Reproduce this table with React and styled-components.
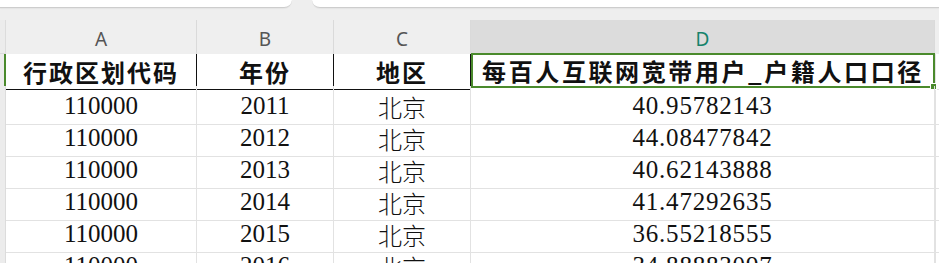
import React from 'react';
import styled, { createGlobalStyle } from 'styled-components';

const GlobalStyle = createGlobalStyle`
  html, body {
    margin: 0;
    padding: 0;
    background: #ffffff;
    overflow: hidden;
  }
`;

const COLUMNS = '6px 191px 137px 137px 464px 1fr';
const GREEN = '#4a8a2c';
const GRID_LINE = '#e2e2e2';

const Sheet = styled.div`
  width: 939px;
  height: 263px;
  overflow: hidden;
  background: #ffffff;
`;

const TabStrip = styled.div`
  display: flex;
  justify-content: space-between;
  height: 20px;
  background: #eeeeee;
`;

const TabPanel = styled.div`
  width: ${(props) => props.width}px;
  height: 7px;
  background: #ffffff;
  border-bottom: 1px solid #cdcdcd;
  border-bottom-left-radius: ${(props) => (props.side === 'right' ? 10 : 0)}px;
  border-bottom-right-radius: ${(props) => (props.side === 'left' ? 10 : 0)}px;
  box-shadow: 0 1px 1px rgba(0, 0, 0, 0.04);
`;

const Row = styled.div`
  display: grid;
  grid-template-columns: ${COLUMNS};
  height: ${(props) => props.height}px;
`;

const RowHead = styled.div`
  background: #ececec;
  border-right: 1px solid ${(props) => (props.active ? GREEN : '#dcdcdc')};
  border-right-width: ${(props) => (props.active ? 2 : 1)}px;
  border-bottom: 1px solid #dcdcdc;
  box-sizing: border-box;
`;

const ColHead = styled.div`
  display: flex;
  align-items: center;
  justify-content: center;
  box-sizing: border-box;
  padding-top: 3px;
  background: ${(props) => (props.active ? '#dcdcdc' : '#efefef')};
  border-right: 1px solid #dadada;
  font-family: 'Noto Sans', 'Liberation Sans', sans-serif;
  font-size: 19px;
  color: ${(props) => (props.active ? '#17836b' : '#555555')};
`;

const Cell = styled.div`
  position: relative;
  display: flex;
  align-items: center;
  justify-content: center;
  box-sizing: border-box;
  padding-top: ${(props) => (props.bold ? 0 : props.cjk ? 3 : 2)}px;
  border-right: 1px solid ${(props) => (props.strong ? '#111111' : GRID_LINE)};
  border-bottom: 1px solid ${(props) => (props.strong ? '#111111' : GRID_LINE)};
  font-family: ${(props) =>
    props.cjk
      ? "'Noto Sans CJK SC', sans-serif"
      : "'Liberation Serif', 'Noto Sans CJK SC', serif"};
  font-size: ${(props) => (props.cjk ? 24 : 25)}px;
  font-weight: ${(props) => (props.bold ? 700 : props.cjk ? 300 : 400)};
  color: #111111;
  white-space: nowrap;
  letter-spacing: ${(props) => props.spacing || 0}px;
`;

const SelectedCell = styled(Cell)`
  border: none;
  box-shadow: inset 0 0 0 2px ${GREEN};
  margin-top: -1px;
  height: 35px;

  &::after {
    content: '';
    position: absolute;
    right: -2px;
    bottom: -2px;
    width: 5px;
    height: 5px;
    background: ${GREEN};
    border: 1px solid #ffffff;
  }
`;

const Tail = styled.div`
  border-bottom: 1px solid ${GRID_LINE};
  border-left: 1px solid ${GRID_LINE};
`;

const HeaderTail = styled.div`
  background: #efefef;
`;

const rows = [
  ['110000', '2011', '北京', '40.95782143'],
  ['110000', '2012', '北京', '44.08477842'],
  ['110000', '2013', '北京', '40.62143888'],
  ['110000', '2014', '北京', '41.47292635'],
  ['110000', '2015', '北京', '36.55218555'],
  ['110000', '2016', '北京', '34.88883097'],
];

const App = () => (
  <Sheet>
    <GlobalStyle />
    <TabStrip>
      <TabPanel width={292} side="left" />
      <TabPanel width={627} side="right" />
    </TabStrip>

    <Row height={34}>
      <RowHead />
      <ColHead>A</ColHead>
      <ColHead>B</ColHead>
      <ColHead>C</ColHead>
      <ColHead active>D</ColHead>
      <HeaderTail />
    </Row>

    <Row height={32}>
      <RowHead active />
      <Cell cjk bold strong spacing={2}>行政区划代码</Cell>
      <Cell cjk bold strong spacing={2}>年份</Cell>
      <Cell cjk bold strong spacing={2}>地区</Cell>
      <SelectedCell cjk bold spacing={2.6}>每百人互联网宽带用户_户籍人口口径</SelectedCell>
      <Tail />
    </Row>

    {rows.map(([code, year, region, value]) => (
      <Row height={32} key={year}>
        <RowHead />
        <Cell>{code}</Cell>
        <Cell>{year}</Cell>
        <Cell cjk>{region}</Cell>
        <Cell spacing={0.8}>{value}</Cell>
        <Tail />
      </Row>
    ))}
  </Sheet>
);

export default App;
